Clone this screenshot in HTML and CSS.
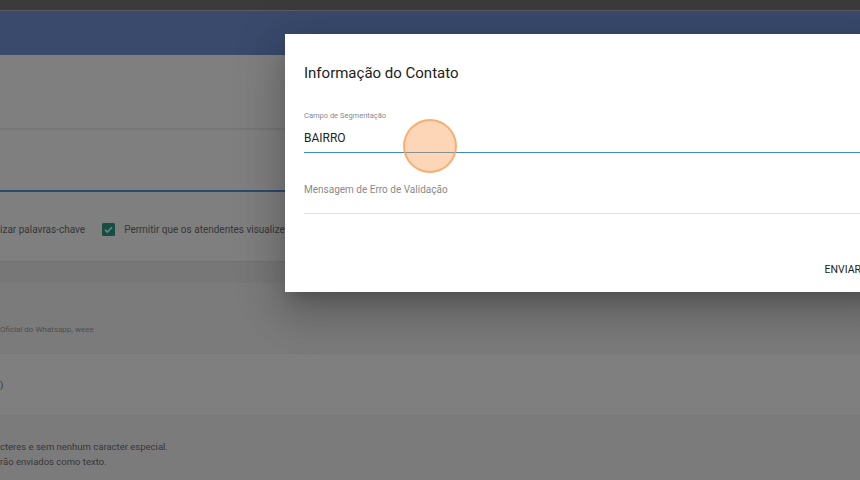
FILE: index.html
```html
<!DOCTYPE html>
<html lang="pt">
<head>
<meta charset="utf-8">
<link rel="stylesheet" href="styles.css">
</head>
<body>
<div class="page">
  <div class="topbar"></div>
  <div class="header"></div>
  <div class="row r1"></div>
  <div class="row r2"></div>
  <div class="row r3">
    <span class="opt">izar palavras-chave</span>
    <span class="check"><svg width="13" height="13" viewBox="0 0 13 13"><rect width="13" height="13" rx="1.5" fill="#2c9c88"/><path d="M3 6.8l2.3 2.3 4.7-4.8" fill="none" stroke="#fff" stroke-width="1.6"/></svg></span>
    <span class="opt">Permitir que os atendentes visualizem as palavras-chave</span>
  </div>
  <div class="row r4"></div>
  <div class="row r5"><span class="hint">Oficial do Whatsapp, weee</span></div>
  <div class="row r6"><span class="txt">)</span></div>
  <div class="row r7"><span class="txt">cteres e sem nenhum caracter especial.<br>rão enviados como texto.</span></div>
</div>
<div class="overlay"></div>
<div class="dialog">
  <h2 class="title">Informação do Contato</h2>
  <div class="field focused">
    <label class="flabel">Campo de Segmentação</label>
    <div class="value">BAIRRO</div>
  </div>
  <div class="field">
    <div class="placeholder">Mensagem de Erro de Validação</div>
  </div>
  <div class="actions"><button class="btn">ENVIAR</button></div>
</div>
<div class="click"></div>
</body>
</html>
```
FILE: styles.css
```css
html, body { margin: 0; padding: 0; }
body { width: 860px; height: 480px; overflow: hidden; font-family: Roboto, "Liberation Sans", sans-serif; background: #fff; position: relative; }
.page { display: flex; flex-direction: column; }
.topbar { height: 10px; background: #787676; border-bottom: 1px solid #b6b6c2; }
.header { height: 44px; background: #7394d8; }
.row { background: #fff; display: flex; align-items: center; }
.r1 { height: 73px; border-bottom: 2px solid #ededed; }
.r2 { height: 60px; border-bottom: 2px solid #5a94dc; }
.r3 { height: 63px; padding-top: 6px; border-bottom: 1px solid #e4e4e4; }
.r4 { height: 21px; background: #eeeeee; }
.r5 { height: 70px; background: #f7f7f7; border-bottom: 1px solid #f0f0f0; align-items: flex-start; }
.r6 { height: 61px; border-bottom: 1px solid #f3f3f3; }
.r7 { height: 70px; background: #f7f7f7; align-items: flex-start; }
.opt { font-size: 10px; color: #707070; white-space: nowrap; }
.check { display: inline-flex; margin: 0 9px 0 17px; }
.hint { font-size: 8px; color: #a0a0a0; margin-top: 42px; }
.txt { font-size: 9.5px; color: #707070; line-height: 15px; }
.r7 .txt { margin-top: 23px; }
.overlay { position: absolute; inset: 0; background: rgba(0,0,0,0.5); }
.dialog { position: absolute; left: 285px; top: 34px; width: 608px; height: 258px; box-sizing: border-box; background: #fff; padding: 29px 20px 0 19px; box-shadow: 0 11px 15px -7px rgba(0,0,0,.2), 0 24px 38px 3px rgba(0,0,0,.14), 0 9px 46px 8px rgba(0,0,0,.12); }
.title { margin: 0; font-size: 15px; font-weight: 400; line-height: 20px; color: #222; }
.field { border-bottom: 1px solid #e0e0e0; }
.field.focused { margin-top: 28px; border-bottom: 1px solid #3d8ec2; padding-bottom: 6px; }
.flabel { display: block; font-size: 7.5px; color: #8a8a8a; line-height: 10px; }
.value { font-size: 12px; line-height: 16px; color: #222; margin-top: 9px; }
.placeholder { font-size: 10px; line-height: 14px; color: #8a8a8a; padding: 30px 0 16px; }
.actions { display: flex; justify-content: flex-end; margin-top: 45px; }
.btn { font-family: Roboto, "Liberation Sans", sans-serif; font-size: 10.5px; color: #222; background: none; border: 0; padding: 4px 12px 4px 8px; letter-spacing: 0; }
.click { position: absolute; left: 403px; top: 119px; width: 50px; height: 50px; border-radius: 50%; background: rgba(251,150,76,0.4); border: 2px solid rgba(247,160,90,0.75); }
```
